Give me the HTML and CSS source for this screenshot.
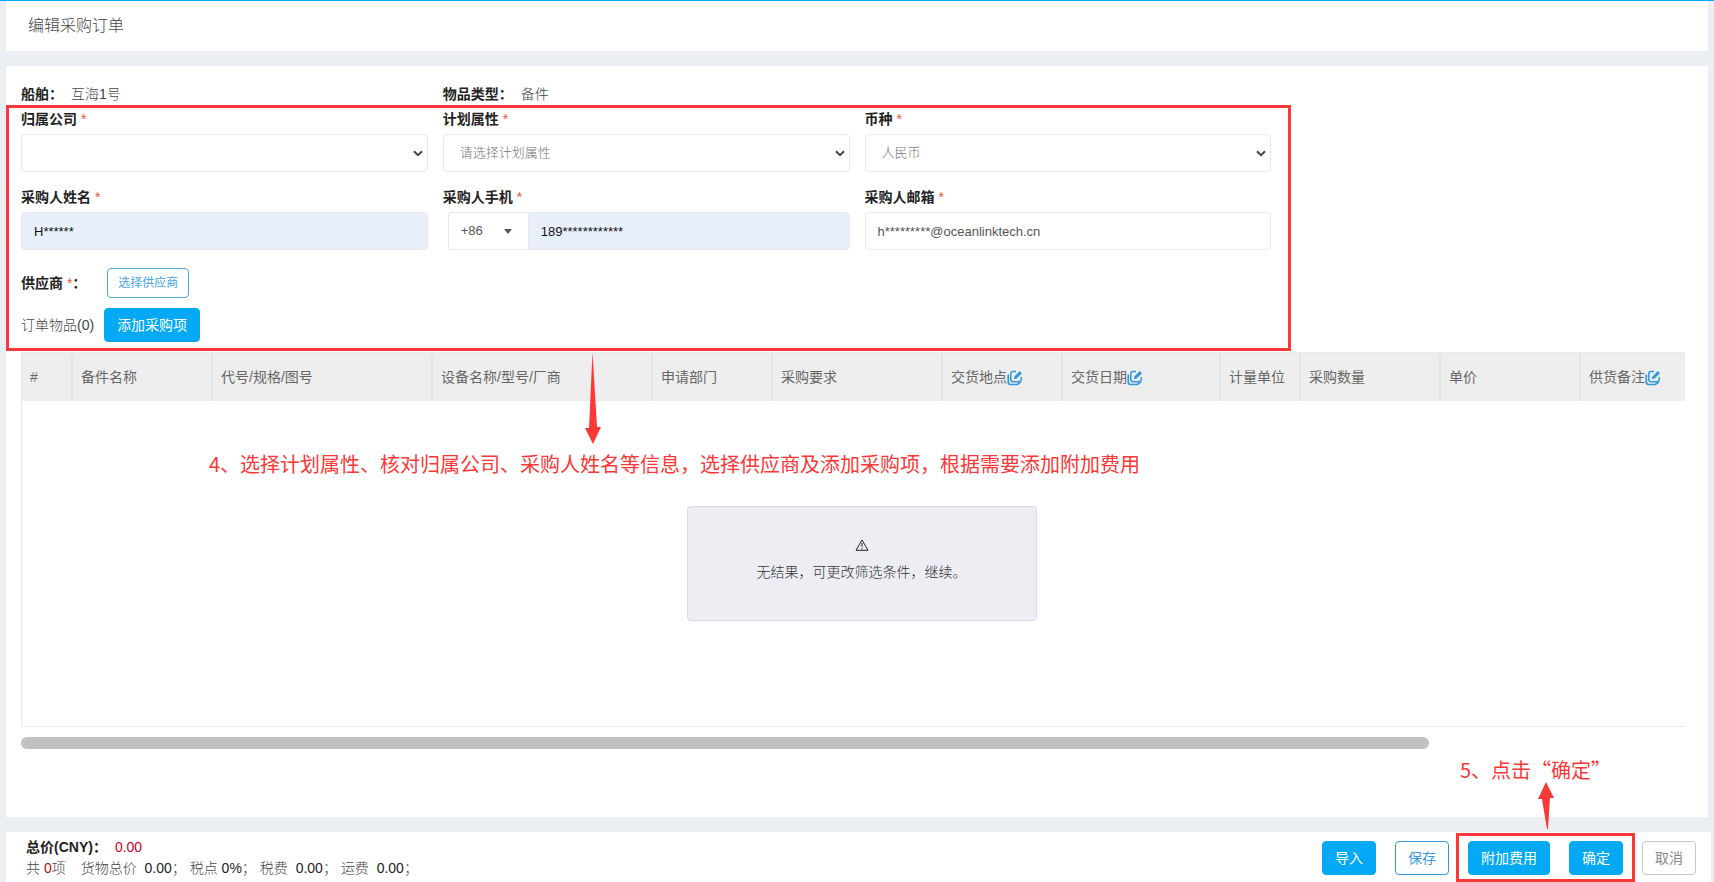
FILE: index.html
```html
<!DOCTYPE html>
<html lang="zh-CN">
<head>
<meta charset="utf-8">
<title>编辑采购订单</title>
<link rel="stylesheet" href="styles.css">
</head>
<body>
<svg class="sprite" aria-hidden="true">
  <symbol id="edit" viewBox="0 0 16 16">
    <path d="M9 1.500H6Q3.800 1.500 3.800 3.700v5.800Q3.800 11.700 6 11.700h6Q14.200 11.700 14.200 9.500V7" fill="none" stroke="currentColor" stroke-width="1.500"/>
    <path d="M1.300 4.500v7.600Q1.300 14.500 3.700 14.500h6.800L13.500 12" fill="none" stroke="currentColor" stroke-width="1.700"/>
    <path d="M6.800 9.200l.6-2.800L12.800 1l2.200 2.200L9.600 8.600z" fill="currentColor"/>
  </symbol>
</svg>
<header class="page-header"><h1 class="page-title">编辑采购订单</h1></header>
<main class="panel">
  <div class="form-grid info-row">
    <div><b>船舶：</b><span class="info-value">互海1号</span></div>
    <div><b>物品类型：</b><span class="info-value">备件</span></div>
  </div>
  <form class="form-grid fields">
    <div class="field">
      <label for="company">归属公司 <i class="required">*</i></label>
      <div class="select-wrap"><select id="company" class="control"><option></option></select><svg class="chevron" viewBox="0 0 10 7"><path d="M1 1.200l4 4 4-4"/></svg></div>
    </div>
    <div class="field">
      <label for="plan">计划属性 <i class="required">*</i></label>
      <div class="select-wrap"><select id="plan" class="control"><option>请选择计划属性</option></select><svg class="chevron" viewBox="0 0 10 7"><path d="M1 1.200l4 4 4-4"/></svg></div>
    </div>
    <div class="field">
      <label for="currency">币种 <i class="required">*</i></label>
      <div class="select-wrap"><select id="currency" class="control"><option>人民币</option></select><svg class="chevron" viewBox="0 0 10 7"><path d="M1 1.200l4 4 4-4"/></svg></div>
    </div>
    <div class="field first">
      <label for="buyer">采购人姓名 <i class="required">*</i></label>
      <input id="buyer" class="control filled" type="text" value="H******">
    </div>
    <div class="field">
      <label for="phone">采购人手机 <i class="required">*</i></label>
      <div class="phone">
        <button type="button" class="dial-code">+86<span class="caret"></span></button>
        <input id="phone" class="control filled" type="tel" value="189************">
      </div>
    </div>
    <div class="field">
      <label for="email">采购人邮箱 <i class="required">*</i></label>
      <input id="email" class="control" type="text" value="h*********@oceanlinktech.cn">
    </div>
  </form>
  <div class="supplier-row"><b>供应商 <i class="required">*</i>：</b><button type="button" class="btn btn-small">选择供应商</button></div>
  <div class="items-row"><span class="light">订单物品(0)</span><button type="button" class="btn btn-primary">添加采购项</button></div>
  <section class="table-area">
    <div class="table-scroll">
      <table class="items">
        <colgroup><col class="w50"><col class="w140"><col class="w220"><col class="w220"><col class="w120"><col class="w170"><col class="w120"><col class="w158"><col class="w80"><col class="w140"><col class="w140"><col class="w320"></colgroup>
        <thead><tr>
          <th>#</th><th>备件名称</th><th>代号/规格/图号</th><th>设备名称/型号/厂商</th><th>申请部门</th><th>采购要求</th>
          <th>交货地点<svg class="edit"><use href="#edit"/></svg></th>
          <th>交货日期<svg class="edit"><use href="#edit"/></svg></th>
          <th>计量单位</th><th>采购数量</th><th>单价</th>
          <th>供货备注<svg class="edit"><use href="#edit"/></svg></th>
        </tr></thead>
      </table>
      <div class="empty-area">
        <div class="empty">
          <svg class="warning" viewBox="0 0 14 12"><path d="M7 1L13 11.300H1z"/><path d="M7 4v4M7 9v1.300"/></svg>
          <p>无结果，可更改筛选条件，继续。</p>
        </div>
      </div>
    </div>
    <div class="scrollbar"><div class="thumb"></div></div>
    <div class="note note-step4">
      <svg class="arrow" viewBox="0 0 16 92"><path d="M7.500 0L12 75H16L8 92 0 76H4z"/></svg>
      <p>4、选择计划属性、核对归属公司、采购人姓名等信息，选择供应商及添加采购项，根据需要添加附加费用</p>
    </div>
  </section>
  <div class="outline outline-form"></div>
</main>
<footer class="footer">
  <div class="totals">
    <div><b>总价(CNY)：</b><span class="red total">0.00</span></div>
    <div class="breakdown"><span class="count">共 <em class="red">0</em>项</span><span>货物总价 &nbsp;<em>0.00</em>；</span><span>税点 <em>0%</em>；</span><span>税费 &nbsp;<em>0.00</em>；</span><span>运费 &nbsp;<em>0.00</em>；</span></div>
  </div>
  <div class="actions">
    <button type="button" class="btn btn-primary">导入</button>
    <button type="button" class="btn btn-outline">保存</button>
    <div class="marked">
      <button type="button" class="btn btn-primary">附加费用</button>
      <button type="button" class="btn btn-primary">确定</button>
      <div class="outline outline-actions"></div>
      <div class="note note-step5">
        <p>5、点击“确定”</p>
        <svg class="arrow" viewBox="0 0 16 47"><path d="M8 0L16 16H12L10 47H9L4 17H0z"/></svg>
      </div>
    </div>
    <button type="button" class="btn btn-cancel">取消</button>
  </div>
</footer>
</body>
</html>
```
FILE: styles.css
```css
* { box-sizing: border-box; }
body {
  margin: 0;
  min-height: 100vh;
  padding-left: 6px;
  display: flex;
  flex-direction: column;
  gap: 15px;
  overflow: hidden;
  border-top: 1px solid #03a9f4;
  background: #ebeff4;
  color: #222;
  font: 14px/20px "Liberation Sans", "Noto Sans CJK SC", sans-serif;
}
button, input, select { font: inherit; }
p, h1 { margin: 0; }
i, em { font-style: normal; }
.sprite { position: absolute; width: 0; height: 0; }
.light { color: #444; font-weight: 300; }
.red { color: #d0021b; }
.required { color: #f0553f; font-weight: 400; }

.page-header { margin-right: 6px; padding: 13px 22px; background: #fff; }
.page-title { color: #444; font-size: 16px; line-height: 24px; font-weight: 300; }

.panel {
  position: relative;
  flex: 1;
  margin-right: 6px;
  padding: 18px 15px 0;
  background: #fff;
}
.form-grid { display: grid; grid-template-columns: repeat(4, 1fr); column-gap: 15px; }
.info-value { margin-left: 8px; color: #444; font-weight: 300; }
.info-row { margin-bottom: 5px; }
.fields { row-gap: 15px; }
.first { grid-column: 1; }
.field label { display: block; margin-bottom: 5px; font-weight: 700; }
.control {
  display: block;
  width: 100%;
  height: 38px;
  padding: 0 12px;
  border: 1px solid #e8e8e8;
  border-radius: 4px;
  background: #fff;
  color: #555;
  font-size: 13px;
}
.filled { background: #e8f0fe; color: #111; }
select.control { appearance: none; padding-left: 16px; color: #777; font-weight: 300; }
.select-wrap { position: relative; }
.chevron {
  position: absolute;
  right: 5px;
  top: 16px;
  width: 10px;
  height: 7px;
  fill: none;
  stroke: #444;
  stroke-width: 2;
  pointer-events: none;
}
.phone { display: flex; padding-left: 5px; }
.phone .control { flex: 1; border-radius: 0 4px 4px 0; }
.dial-code {
  display: flex;
  align-items: center;
  justify-content: space-between;
  width: 80px;
  padding: 0 16px 0 12px;
  border: 1px solid #e8e8e8;
  border-right: 0;
  border-radius: 4px 0 0 4px;
  background: #fff;
  color: #555;
  font-size: 13px;
}
.caret { border: 4px solid transparent; border-top: 5px solid #555; border-bottom: 0; }

.btn {
  height: 34px;
  padding: 0 12px;
  border: 1px solid #03a9f4;
  border-radius: 4px;
  background: #fff;
  font-size: 14px;
  white-space: nowrap;
}
.btn-primary { background: #03a9f4; color: #fff; }
.btn-outline { border-color: #3498db; color: #3498db; }
.btn-cancel { border-color: #c4c7cc; color: #888; }
.btn-small { height: 30px; padding: 0 10px; border-color: #55a8e6; color: #4ba3e3; font-size: 12px; }
.supplier-row { display: flex; align-items: center; gap: 21px; margin-top: 18px; }
.items-row { display: flex; align-items: center; gap: 10px; margin-top: 10px; }

.table-area { position: relative; margin: 10px 8px 0 0; }
.table-scroll { height: 375px; overflow: hidden; border: 1px solid #e6e8ea; border-right: 0; }
.items { width: 1878px; table-layout: fixed; border-collapse: separate; border-spacing: 0; }
.items th {
  height: 48px;
  padding: 0 8px;
  border-right: 2px solid #e1e6ea;
  background: #eee;
  color: #666;
  font-weight: 400;
  text-align: left;
  white-space: nowrap;
}
.w50 { width: 51px; }
.w80 { width: 80px; }
.w120 { width: 120px; }
.w140 { width: 140px; }
.w158 { width: 158px; }
.w170 { width: 170px; }
.w220 { width: 220px; }
.w320 { width: 319px; }
.edit { width: 16px; height: 16px; color: #3498db; vertical-align: -4px; }
.empty-area { display: flex; justify-content: center; margin-right: -16px; padding-top: 105px; }
.empty {
  display: flex;
  flex-direction: column;
  align-items: center;
  gap: 11px;
  width: 350px;
  padding: 32px 0 38px;
  border: 1px solid #d8dbe0;
  border-radius: 4px;
  background: #eceef3;
  color: #333;
  font-weight: 300;
}
.warning { width: 14px; height: 12px; fill: none; stroke: #222; }
.scrollbar { margin-top: 10px; padding-right: 8px; }
.thumb { width: 85%; height: 12px; border-radius: 6px; background: #c1c1c1; }

.footer {
  display: flex;
  justify-content: space-between;
  height: 50px;
  margin-right: 3px;
  padding: 5px 15px 3px 20px;
  background: #fff;
}
.total { margin-left: 8px; }
.breakdown { display: flex; gap: 4px; margin-top: 1px; color: #444; font-weight: 300; }
.breakdown em { font-weight: 400; }
.breakdown em:not(.red) { color: #222; }
.count { margin-right: 11px; }
.actions { display: flex; gap: 19px; padding-top: 4px; }
.marked { position: relative; display: flex; gap: 19px; }

.outline { position: absolute; border: 3px solid #fb3838; pointer-events: none; }
.outline-form { top: 39px; left: 0; width: 1285px; height: 246px; }
.outline-actions { inset: -8px -12px -3px; }
.note { position: absolute; color: #fb3838; font: 20px/28px "Noto Sans CJK SC", sans-serif; white-space: nowrap; }
.arrow { display: block; width: 16px; fill: #fb3838; }
.note-step4 { top: 0; left: 188px; }
.note-step4 .arrow { height: 92px; margin-left: 376px; }
.note-step4 p { margin-top: 6px; }
.note-step5 { right: 12px; bottom: 50px; line-height: 24px; }
.note-step5 .arrow { height: 47px; margin-left: 78px; }
```
